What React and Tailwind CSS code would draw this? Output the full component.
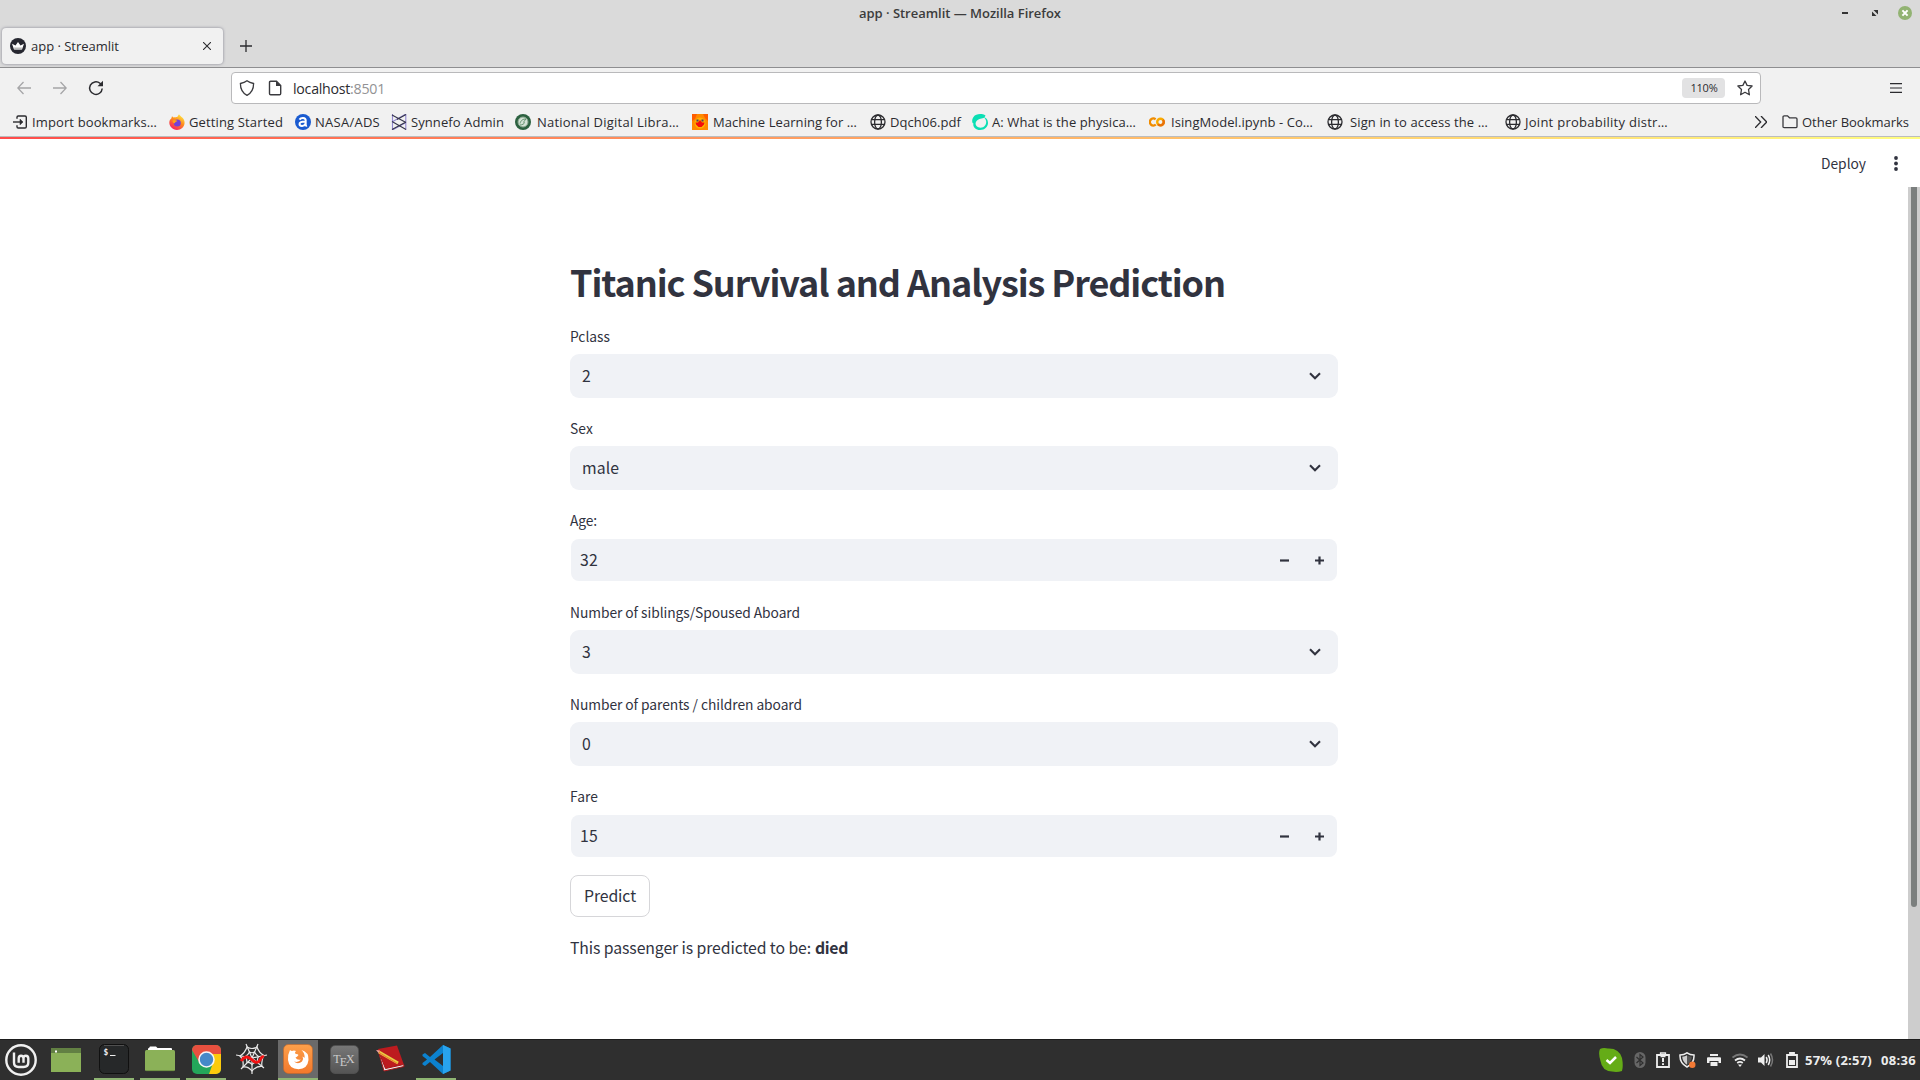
import { useLayoutEffect, useRef } from "react";

// Text whose tracking is adjusted so that it fills the given width.
function Fit({ w, className = "", children }) {
  const ref = useRef(null);
  useLayoutEffect(() => {
    const el = ref.current;
    el.style.letterSpacing = "0px";
    const natural = el.getBoundingClientRect().width;
    el.style.letterSpacing = (w - natural) / el.textContent.length + "px";
  }, [w]);
  return (
    <span ref={ref} className={"inline-block shrink-0 whitespace-nowrap " + className}>
      {children}
    </span>
  );
}

const Globe = () => (
  <svg className="size-4" viewBox="0 0 16 16" fill="none" stroke="#2b2b2f" strokeWidth="1.3">
    <circle cx="8" cy="8" r="7" />
    <ellipse cx="8" cy="8" rx="3.4" ry="7" />
    <path d="M1.6 5.6h12.8M1.6 10.4h12.8" />
  </svg>
);

const bookmarks = [
  {
    label: "Import bookmarks…", w: 125, gap: "gap-[4px] w-[157px]",
    icon: (
      <svg className="size-4" viewBox="0 0 16 16" fill="none" stroke="#2b2b2f" strokeWidth="1.4">
        <path d="M5 4.8V3.2Q5 2 6.200 2H13Q14.300 2 14.300 3.200V12.800Q14.300 14 13 14H6.200Q5 14 5 12.800V11.200" />
        <path d="M1 8H9" />
        <path d="M8 5.200L11 8L8 10.800Z" fill="#2b2b2f" strokeWidth=".6" />
      </svg>
    ),
  },
  {
    label: "Getting Started", w: 94, gap: "gap-[4px] w-[126px]",
    icon: (
      <svg className="size-4" viewBox="0 0 16 16">
        <defs>
          <linearGradient id="ff" x1=".8" y1="0" x2=".2" y2="1">
            <stop offset="0" stopColor="#fff044" />
            <stop offset=".45" stopColor="#ff8a1c" />
            <stop offset="1" stopColor="#f5156c" />
          </linearGradient>
        </defs>
        <path d="M2.300 4.500L3 2.200L4.600 3.600C6 3 7 3.200 8.200 3L10 .300C11 2.500 15.800 4 15.600 9C15.300 13 12 15.900 8 15.900C3.500 15.900.300 12.500.300 8.600C.300 6.500 1.200 5.200 2.300 4.500Z" fill="url(#ff)" />
        <circle cx="8.300" cy="8.900" r="3.500" fill="#7440d8" />
        <path d="M3.500 6.500C5.500 5.500 7 6 8.500 7C7.500 8 6 7.500 6 9C5 10 3.500 8.500 3.500 6.500Z" fill="#ffa018" />
      </svg>
    ),
  },
  {
    label: "NASA/ADS", w: 65, gap: "gap-[4px] w-[96px]",
    icon: (
      <svg className="size-4" viewBox="0 0 16 16">
        <circle cx="8" cy="8" r="8" fill="#1a5bd0" />
        <path d="M4.500 5.600C6 3.300 10.600 3.200 10.700 6.300V11Q10.700 12 12 11.600M10.600 7.400C6.500 7.300 4.300 8.300 4.500 10.200C4.800 12.700 9.500 12.400 10.600 9.600" fill="none" stroke="#fff" strokeWidth="2" />
      </svg>
    ),
  },
  {
    label: "Synnefo Admin", w: 93, gap: "gap-[4px] w-[124px]",
    icon: (
      <svg className="size-4" viewBox="0 0 16 16" fill="none" strokeWidth="1.1">
        <path d="M1.500 0V16L15 8.500M14.800 16V0L1 8" stroke="#9187cf" />
        <path d="M1 1L15 8.500M1 7.500L15 15.500M1 15.500L15 8M6 5.500L15 .500" stroke="#35354a" />
      </svg>
    ),
  },
  {
    label: "National Digital Libra…", w: 142, gap: "gap-[6px] w-[177px]",
    icon: (
      <svg className="size-4" viewBox="0 0 16 16">
        <circle cx="8" cy="8" r="8" fill="#2c6140" />
        <circle cx="8" cy="8" r="5" fill="#d5e2d7" stroke="#87a68d" />
        <path d="M5 9.500C6 6 8 5 11 5C9 6 10.500 7 8.500 8C11 8.500 8 11 5 11" fill="none" stroke="#64946f" />
      </svg>
    ),
  },
  {
    label: "Machine Learning for …", w: 144, gap: "gap-[5px] w-[178px]",
    icon: (
      <svg className="size-4" viewBox="0 0 16 16">
        <rect width="16" height="16" fill="#ff8a00" />
        <path d="M0 0H5L3 5L0 7ZM11 0H16V7L13 4Z" fill="#ff5d00" />
        <circle cx="8" cy="9" r="5.500" fill="#ffb100" />
        <path d="M3.500 8.500H6L8 6L10 8.500H12.500L12 10.500L9.500 13H6.500L4 10.500Z" fill="#f40c0c" />
        <path d="M4.500 5.500H6.500V7.500H4.500ZM9.500 5.500H11.500V7.500H9.500Z" fill="#553a62" />
      </svg>
    ),
  },
  { label: "Dqch06.pdf", w: 71, gap: "gap-[4px] w-[102px]", icon: <Globe /> },
  {
    label: "A: What is the physica…", w: 144, gap: "gap-[4px] w-[177px]",
    icon: (
      <svg className="size-4" viewBox="0 0 16 16">
        <path d="M13.500 1.500C10 -.600 4 -.500 1.500 3C-.500 6 0 9 1.500 9.500C.500 12 3 16 8 16C13 16 16 12.500 16 9C16 6 14.500 3.500 12 3.500C15 6 14.500 9.500 13 11.500C11 14.200 7 14.500 4.500 12C2.500 9.500 4 7 6.500 5.500C9 4 12.500 5 13.500 1.500Z" fill="#0bdfb4" />
      </svg>
    ),
  },
  {
    label: "IsingModel.ipynb - Co…", w: 142, gap: "gap-[6px] w-[178px]",
    icon: (
      <svg className="size-4" viewBox="0 0 16 16" fill="none" strokeWidth="2.400">
        <circle cx="11.500" cy="8" r="3.300" stroke="#f9ab00" />
        <path d="M6.600 5.300A3.500 3.500 0 1 0 6.800 10.500" stroke="#f08c00" />
        <path d="M9 10.200A3.300 3.300 0 0 0 13.900 5.700" stroke="#e8710a" />
      </svg>
    ),
  },
  { label: "Sign in to access the …", w: 138, gap: "gap-[7px] w-[178px]", icon: <Globe /> },
  { label: "Joint probability distr…", w: 143, gap: "gap-[4px] w-[200px]", icon: <Globe /> },
];

function Label({ children, w }) {
  return (
    <div className="flex h-[23px] items-center text-[13.8px] text-[#31333f]">
      <Fit w={w}>{children}</Fit>
    </div>
  );
}

function SelectField({ label, w, value, vw }) {
  return (
    <div className="h-[92px]">
      <Label w={w}>{label}</Label>
      <div className="mt-[6px] flex h-[44px] items-center justify-between rounded-[9px] bg-[#f0f2f6] pl-3 pr-[17px] text-[15.8px] text-[#31333f]">
        <Fit w={vw}>{value}</Fit>
        <svg className="h-3 w-3" viewBox="0 0 12 12" fill="none" stroke="#31333f" strokeWidth="2.100">
          <path d="M1 3.200L6 8.200L11 3.200" />
        </svg>
      </div>
    </div>
  );
}

function NumberField({ label, w, value }) {
  return (
    <div className="h-[92px]">
      <Label w={w}>{label}</Label>
      <div className="mx-px mt-[7px] flex h-[42px] items-center rounded-[8px] bg-[#f0f2f6] pl-[9px] pr-[13px] text-[15.8px] text-[#31333f]">
        <Fit w={18}>{value}</Fit>
        <svg className="ml-auto h-[9px] w-[9px]" viewBox="0 0 9 9" stroke="#31333f" strokeWidth="2.200">
          <path d="M0 4.500H9" />
        </svg>
        <svg className="ml-[26px] h-[9px] w-[9px]" viewBox="0 0 9 9" stroke="#31333f" strokeWidth="2.200">
          <path d="M0 4.500H9M4.500 .500V8.500" />
        </svg>
      </div>
    </div>
  );
}

function Task({ running, active, children }) {
  return (
    <div className={"relative flex h-[40px] w-10 items-center justify-center pb-[2px] " + (active ? "bg-[#6a6a6a]" : "")}>
      {children}
      {running && <div className="absolute inset-x-0 bottom-0 h-[2px] bg-[#8fb573]" />}
    </div>
  );
}

function Taskbar() {
  return (
    <div className="flex h-[41px] shrink-0 items-center border-t border-[#1d1d1d] bg-[#2f2f2f]">
      <svg className="ml-[5px] size-8 shrink-0" viewBox="0 0 32 32" fill="none" stroke="#f0f0f0">
        <circle cx="16" cy="16" r="14.700" strokeWidth="2.400" />
        <path d="M9 8.500V18.500Q9 23 13.500 23H18.500Q23.300 23 23.300 18.500V14.500Q23.300 11.800 20.800 11.800Q18.500 11.800 18.500 14.300V18.700M18.500 14.500Q18.500 11.800 16 11.800Q13.700 11.800 13.700 14.500V18.700" strokeWidth="2.400" />
      </svg>
      <svg className="ml-[14px] h-6 w-[30px] shrink-0" viewBox="0 0 30 24">
        <rect width="30" height="24" fill="#8bb158" />
        <rect width="30" height="5" fill="#628043" />
        <rect x="4" y="2.500" width="2" height="2" fill="#fff" />
      </svg>
      <div className="ml-[13px] flex gap-[6px]">
        <Task running>
          <svg className="size-[30px]" viewBox="0 0 30 30">
            <rect x=".500" y=".500" width="29" height="29" rx="5" fill="#262829" stroke="#101010" />
            <path d="M5 1.500H25" stroke="#505050" />
            <text x="4.500" y="11" fill="#eee" fontSize="8" fontWeight="bold" fontFamily="DejaVu Sans Mono">$</text>
            <path d="M11 11.500H16.500" stroke="#eee" />
          </svg>
        </Task>
        <Task running>
          <svg className="h-[26px] w-[30px]" viewBox="0 0 30 26">
            <path d="M3 4V3Q3 2 4 2L5 .500H11L12.500 2H26Q27 2 27 3V4Z" fill="#fff" />
            <rect y="4" width="30" height="21" rx="1.500" fill="#8bb158" />
            <path d="M1 24.600H29" stroke="#6e9043" />
          </svg>
        </Task>
        <Task running>
          <svg className="size-[29px]" viewBox="0 0 29 29">
            <defs><clipPath id="cr"><rect width="29" height="29" rx="5" /></clipPath></defs>
            <g clipPath="url(#cr)">
              <rect width="29" height="29" fill="#24a65a" />
              <path d="M0 0H29V10H14.500L7 17L0 5Z" fill="#e8503f" />
              <path d="M14.500 9H29V29H17L21 18Z" fill="#fccb0c" />
            </g>
            <circle cx="14.500" cy="14.500" r="7.500" fill="#4589c8" stroke="#f5f5f5" strokeWidth="1.600" />
          </svg>
        </Task>
        <Task>
          <svg className="h-8 w-8" viewBox="0 0 32 32" fill="none">
            <path d="M16 15L10 1M16 15L22 1M16 15L31 12M16 15L28 25M16 15V31M16 15L5 26M16 15L0 12" stroke="#e8e8e8" strokeWidth="1.200" />
            <path d="M11 4Q16 7 21 4Q23 10 28 12.500Q25 17 26 23.500Q20 23 16 28Q12 23 7 24Q8 17 4 13Q9 10 11 4ZM13.500 9Q16 10.500 18.500 9Q20 12 22.500 13.500Q21 16 21.500 19Q18 19 16 21.500Q14 19 11 19.500Q11 16 9.500 13.500Q12 12 13.500 9Z" stroke="#e8e8e8" strokeWidth="1.200" />
            <path d="M5 18Q10 11 15 16Q21 22 24 17Q26 13 28 14" stroke="#f31212" strokeWidth="3" />
          </svg>
        </Task>
        <Task running active>
          <svg className="size-[30px]" viewBox="0 0 30 30">
            <defs><linearGradient id="fo" x1="0" x2="0" y1="0" y2="1"><stop stopColor="#fda04b" /><stop offset="1" stopColor="#f3782b" /></linearGradient></defs>
            <rect x=".500" y=".500" width="29" height="29" rx="5" fill="url(#fo)" stroke="#c66727" strokeWidth=".600" />
            <path d="M7 6Q8 7 9 7Q11 6 13 7Q11 9 13 10Q15 10 15.500 11Q14 13 12.500 13.500Q14 16.500 18 15.500Q15.500 19 11 17.500Q15 21 19 17.500Q21 15 19.500 12.500Q21 13 21.500 14Q22 9 18.500 6Q26 8 25.500 16Q24.500 25 15.500 25.300Q6 25 5 16Q4.800 10 7 6Z" fill="#fff" />
          </svg>
        </Task>
        <Task>
          <div className="flex size-[29px] items-center justify-center rounded-[5px] border border-[#505050] bg-gradient-to-b from-[#777] to-[#555] font-['Liberation_Serif'] text-[12px] leading-none text-[#ccc]">
            <span>T</span><span className="-ml-px mt-[5px]">E</span><span className="-ml-px">X</span>
          </div>
        </Task>
        <Task>
          <svg className="size-[30px]" viewBox="0 0 30 30">
            <path d="M3 5L22 1.500L29 21L10 25Z" fill="#bd1b1f" />
            <path d="M3 6L9 27L29 22.500L28.700 20.500L10.500 24.500Z" fill="#eee" stroke="#a71518" />
            <path d="M4 8L23 19" stroke="#e6cf43" strokeWidth="3" />
            <path d="M4 8.500L22 19.200" stroke="#f0772d" strokeWidth="1" />
            <path d="M1 6L5 6.500L3.500 9Z" fill="#f4a8a0" />
          </svg>
        </Task>
        <Task running>
          <svg className="size-[29px]" viewBox="0 0 29 29">
            <path d="M21 0L28.500 3.500V25.500L21 29L8 17L3 21L.500 19.600V18L5 14.500L.500 11V9.400L3 8L8 12ZM21 8L12.500 14.500L21 21Z" fill="#0c82cf" fillRule="evenodd" />
            <path d="M21 0L28.500 3.500V25.500L21 29Z" fill="#28a3ee" />
          </svg>
        </Task>
      </div>
      <div className="ml-auto flex items-center text-[#ededed]">
        <svg className="h-6 w-6" viewBox="0 0 24 24">
          <path d="M1 1Q4 -.500 9 .500Q20 0 23 10Q24.500 18 23 23Q18 24.500 13 23.500Q3 23 1.500 13Q-1 5 1 1Z" fill="#65ac17" />
          <path d="M7.500 12L11 15L17 9" fill="none" stroke="#fff" strokeWidth="2.500" />
        </svg>
        <svg className="ml-[11px] h-4 w-3" viewBox="0 0 12 16" fill="none">
          <rect x=".500" width="11" height="16" rx="5.500" fill="#666" />
          <path d="M2.500 5L9 11L6 13.500V2.500L9 5L2.500 11" stroke="#2f2f2f" strokeWidth="1.200" />
        </svg>
        <svg className="ml-[10px] h-4 w-[14px]" viewBox="0 0 14 16" fill="none" stroke="#eee" strokeWidth="1.800">
          <path d="M1 3H13V15H1Z" /><path d="M4.500 3V1H9.500V3M4.500 4.500H9.500" strokeWidth="1.300" /><path d="M7 6V10M7 11.200V13" strokeWidth="2" />
        </svg>
        <svg className="ml-[9px] h-4 w-[17px]" viewBox="0 0 17 16">
          <path d="M8 .800Q11 3 15 3Q15.500 11 8 15Q.500 11 1 3Q5 3 8 .800Z" fill="none" stroke="#eee" strokeWidth="1.500" />
          <path d="M8 3.200Q10 4.600 12.800 4.800Q12.500 10 8 12.800Z" fill="#555" /><path d="M8 3.200Q6 4.600 3.200 4.800Q3.500 10 8 12.800Z" fill="#ccc" />
          <circle cx="13.300" cy="12.800" r="3.200" fill="#f47a35" />
        </svg>
        <svg className="ml-[11px] h-[14px] w-[14px]" viewBox="0 0 14 14" fill="#eee">
          <path d="M3 1H11V3H3ZM1 4.200H13Q14 4.200 14 5.200V10H11.500V8H2.500V10H0V5.200Q0 4.200 1 4.200ZM3.500 9H10.500V13H3.500Z" />
        </svg>
        <svg className="ml-[11px] h-4 w-4" viewBox="0 0 16 16" fill="none" strokeWidth="1.800">
          <path d="M.500 5.500Q8 -.500 15.500 5.500" stroke="#777" />
          <path d="M3 8.500Q8 4.500 13 8.500M5.200 11Q8 8.800 10.800 11" stroke="#eee" /><path d="M6 12.500H10L8 15Z" fill="#eee" />
        </svg>
        <svg className="ml-[10px] h-4 w-4" viewBox="0 0 16 16" fill="none" strokeWidth="1.500">
          <path d="M0 5.500H3L6.500 2V14L3 10.500H0Z" fill="#eee" />
          <path d="M8.200 5Q10 8 8.200 11M10.200 3Q13.200 8 10.200 13" stroke="#eee" /><path d="M12.500 1.500Q16.500 8 12.500 14.500" stroke="#777" />
        </svg>
        <svg className="ml-[12px] h-4 w-3" viewBox="0 0 12 16" fill="none" stroke="#eee" strokeWidth="1.800">
          <path d="M4 2.500V1H8V2.500M1 3H11V15H1Z" /><path d="M3 8H9V13H3Z" fill="#eee" stroke="none" />
        </svg>
        <Fit w={67} className="ml-[7px] pt-px font-['Open_Sans',sans-serif] text-[13px] font-bold">57% (2:57)</Fit>
        <Fit w={35} className="ml-[9px] mr-1 pt-px font-['Open_Sans',sans-serif] text-[13px] font-bold">08:36</Fit>
      </div>
    </div>
  );
}

export default function App() {
  return (
    <div className="flex h-[1080px] w-[1920px] flex-col overflow-hidden bg-white font-['Open_Sans','Noto_Sans',sans-serif] text-[#2b2b2f]">
      <div className="grid h-[26px] shrink-0 grid-cols-[1fr_auto_1fr] items-center bg-[#dadada]">
        <span />
        <Fit w={202} className="pt-px text-[13px] font-semibold text-[#3c3c3c]">app · Streamlit — Mozilla Firefox</Fit>
        <div className="flex items-center justify-end pr-2">
          <svg className="h-[2px] w-[6px]" viewBox="0 0 6 2"><rect width="6" height="2" fill="#333" /></svg>
          <svg className="ml-6 h-[6px] w-[6px]" viewBox="0 0 6 6"><path d="M1.500 0H6V4.500ZM0 1.500L4.500 6H0Z" fill="#333" /></svg>
          <svg className="ml-5 h-[14px] w-[14px]" viewBox="0 0 14 14"><circle cx="7" cy="7" r="7" fill="#92b372" /><path d="M4.400 4.400L9.600 9.600M9.600 4.400L4.400 9.600" stroke="#fff" strokeWidth="2" /></svg>
        </div>
      </div>
      <div className="flex h-[42px] shrink-0 items-start border-b border-[#8e8e90] bg-[#dadada] pl-[2px] pt-[2px]">
        <div className="flex h-9 w-[221px] items-center rounded-[4px] bg-[#f1f1f1] pl-2 pr-[12px] shadow-[0_0_3px_rgba(90,90,110,0.7)]">
          <svg className="size-4" viewBox="0 0 16 16">
            <circle cx="8" cy="8" r="8" fill="#262730" />
            <path d="M2 5.800L5.500 7.500L8 4L10.500 7.500L14 5.800L12 11.500H4Z" fill="#fff" />
            <path d="M4 9.500L12 9.500L11.500 11.500H4.500Z" fill="#bbb" />
          </svg>
          <Fit w={88} className="ml-[5px] pt-[2px] text-[13px]">app · Streamlit</Fit>
          <svg className="ml-auto h-2 w-2" viewBox="0 0 8 8" stroke="#2b2b2f" strokeWidth="1.100"><path d="M0 0L8 8M8 0L0 8" /></svg>
        </div>
        <svg className="ml-[17px] mt-[12px] h-3 w-3" viewBox="0 0 12 12" stroke="#2b2b2f" strokeWidth="1.300"><path d="M0 6H12M6 0V12" /></svg>
      </div>
      <div className="flex h-[40px] shrink-0 items-center bg-[#f1f1f1]">
        <svg className="ml-[17px] h-[14px] w-[14px]" viewBox="0 0 14 14" fill="none" stroke="#a5a5a7" strokeWidth="1.300"><path d="M14 7H1M6.500 1L.800 7L6.500 13" /></svg>
        <svg className="ml-[22px] h-[14px] w-[14px]" viewBox="0 0 14 14" fill="none" stroke="#a5a5a7" strokeWidth="1.300"><path d="M0 7H13M7.500 1L13.200 7L7.500 13" /></svg>
        <svg className="ml-[21px] h-4 w-4" viewBox="0 0 16 16" fill="none" stroke="#2b2b2f" strokeWidth="1.500"><path d="M14.200 8.500A6.300 6.300 0 1 1 12 3.300L13 4.400" /><path d="M15 .800V6.300H9.500Z" fill="#2b2b2f" stroke="none" /></svg>
        <div className="ml-[127px] flex h-8 w-[1530px] items-center rounded-[4px] border border-[#b9b9bb] bg-white pl-[7px] pr-[7px]">
          <svg className="h-4 w-4" viewBox="0 0 16 16" fill="none" stroke="#3a3a3e" strokeWidth="1.300"><path d="M8 .800Q10.500 2.700 14.600 3.500Q14.600 12 8 15.300Q1.400 12 1.400 3.500Q5.500 2.700 8 .800Z" /></svg>
          <svg className="ml-3 h-4 w-4" viewBox="0 0 16 16" fill="none" stroke="#3a3a3e" strokeWidth="1.400"><path d="M3.200 1.300H9.500L13.700 5.500V13.500Q13.700 14.700 12.500 14.700H3.700Q2.500 14.700 2.500 13.500V2.500Q2.500 1.300 3.700 1.300" /><path d="M9 1V6H14Z" fill="#3a3a3e" stroke="none" /></svg>
          <Fit w={92} className="ml-[10px] pt-[2px] text-[14.200px]">localhost<span className="text-[#929294]">:8501</span></Fit>
          <div className="ml-auto flex h-5 w-[43px] items-center justify-center rounded-[4px] bg-[#e2e2e3] text-[11px]"><Fit w={28} className="pl-px pt-px">110%</Fit></div>
          <svg className="ml-3 h-4 w-4" viewBox="0 0 16 16" fill="none" stroke="#3a3a3e" strokeWidth="1.300" strokeLinejoin="round"><path d="M8 1L10.100 5.400L15.100 6L11.500 9.500L12.400 14.800L8 12.300L3.600 14.800L4.500 9.500L.900 6L5.900 5.400Z" /></svg>
        </div>
        <svg className="ml-auto mr-[18px] h-[10px] w-3" viewBox="0 0 12 10" stroke="#2b2b2f" strokeWidth="1.200"><path d="M0 .700H12M0 5H12M0 9.300H12" /></svg>
      </div>
      <div className="flex h-[29px] shrink-0 items-center border-b border-[#bcbcbd] bg-[#f1f1f1] pl-3 text-[13px]">
        {bookmarks.map((b) => (
          <div key={b.label} className={"flex shrink-0 items-center " + b.gap}>
            <span className="shrink-0">{b.icon}</span>
            <Fit w={b.w} className="pt-px">{b.label}</Fit>
          </div>
        ))}
        <svg className="ml-auto h-3 w-3 shrink-0" viewBox="0 0 12 12" fill="none" stroke="#2b2b2f" strokeWidth="1.300"><path d="M0 0L5.700 6L0 12M6 0L11.700 6L6 12" /></svg>
        <svg className="ml-[15px] h-4 w-4 shrink-0" viewBox="0 0 16 16" fill="none" stroke="#3a3a3e" strokeWidth="1.300"><path d="M1 3Q1 1.800 2.200 1.800H5.500L7.500 3.800H13.800Q15 3.800 15 5V12.500Q15 13.700 13.800 13.700H2.200Q1 13.700 1 12.500Z" /></svg>
        <Fit w={107} className="ml-1 mr-[11px] pt-px">Other Bookmarks</Fit>
      </div>
      <div className="h-[2px] shrink-0 bg-gradient-to-r from-[#ff4b4b] to-[#fffd80]" />
      <div className="flex h-[48px] shrink-0 items-center justify-end font-['Noto_Sans_CJK_SC',sans-serif] text-[13.800px] text-[#31333f]">
        <Fit w={45}>Deploy</Fit>
        <svg className="ml-[28px] mr-[22px] h-[15px] w-1" viewBox="0 0 4 15" fill="#31333f"><circle cx="2" cy="2" r="1.900" /><circle cx="2" cy="7.500" r="1.900" /><circle cx="2" cy="13" r="1.900" /></svg>
      </div>
      <div className="flex min-h-0 flex-1">
        <div className="flex-1 font-['Noto_Sans_CJK_SC',sans-serif]">
          <div className="ml-[570px] w-[768px] pt-[66px] text-[#31333f]">
            <h1 className="flex h-[55px] items-center text-[36px] font-semibold"><Fit w={655}>Titanic Survival and Analysis Prediction</Fit></h1>
            <div className="pt-[17px]">
              <SelectField label="Pclass" w={40} value="2" vw={9} />
              <SelectField label="Sex" w={23} value="male" vw={37} />
              <NumberField label="Age:" w={27} value="32" />
              <SelectField label="Number of siblings/Spoused Aboard" w={230} value="3" vw={9} />
              <SelectField label="Number of parents / children aboard" w={232} value="0" vw={9} />
              <NumberField label="Fare" w={28} value="15" />
            </div>
            <button className="-mt-[2px] flex h-[42px] w-20 items-center justify-center rounded-[8px] border border-[#d6d6d9] text-[15.800px]"><Fit w={52}>Predict</Fit></button>
            <p className="mt-[17px] text-[15.800px] leading-[28px]"><Fit w={241}>This passenger is predicted to be:</Fit><Fit w={33} className="ml-[4px] font-bold">died</Fit></p>
          </div>
        </div>
        <div className="w-3 shrink-0 bg-[#cdcdcd]"><div className="mx-auto h-[720px] w-[6px] rounded-b-[3px] bg-[#7b7f7e]" /></div>
      </div>
      <Taskbar />
    </div>
  );
}
